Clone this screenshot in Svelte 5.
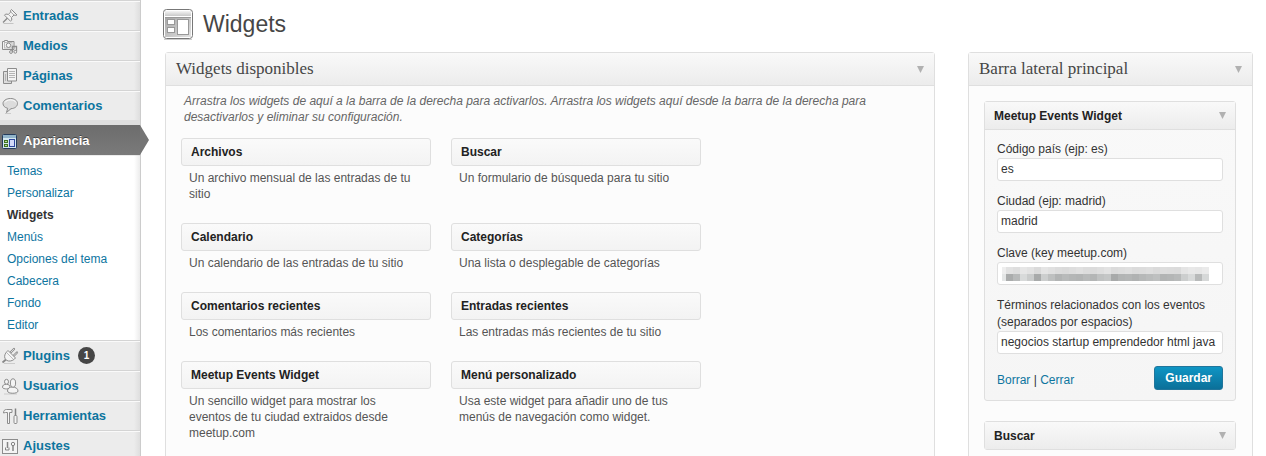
<script lang="ts">
  interface Widget {
    name: string;
    description: string;
  }

  const topMenu = [
    { icon: 'pin', label: 'Entradas' },
    { icon: 'media', label: 'Medios' },
    { icon: 'pages', label: 'Páginas' },
    { icon: 'comment', label: 'Comentarios' }
  ];

  const appearanceMenu = ['Temas', 'Personalizar', 'Widgets', 'Menús', 'Opciones del tema', 'Cabecera', 'Fondo', 'Editor'];

  const bottomMenu = [
    { icon: 'plug', label: 'Plugins', updates: 1 },
    { icon: 'users', label: 'Usuarios' },
    { icon: 'tools', label: 'Herramientas' },
    { icon: 'settings', label: 'Ajustes' }
  ];

  const available: Widget[] = [
    { name: 'Archivos', description: 'Un archivo mensual de las entradas de tu sitio' },
    { name: 'Buscar', description: 'Un formulario de búsqueda para tu sitio' },
    { name: 'Calendario', description: 'Un calendario de las entradas de tu sitio' },
    { name: 'Categorías', description: 'Una lista o desplegable de categorías' },
    { name: 'Comentarios recientes', description: 'Los comentarios más recientes' },
    { name: 'Entradas recientes', description: 'Las entradas más recientes de tu sitio' },
    { name: 'Meetup Events Widget', description: 'Un sencillo widget para mostrar los eventos de tu ciudad extraidos desde meetup.com' },
    { name: 'Menú personalizado', description: 'Usa este widget para añadir uno de tus menús de navegación como widget.' }
  ];

  // grey levels of the mosaic that hides the API key, one per cell
  const maskTop = [238, 226, 222, 230, 226, 218, 228, 224, 220, 218, 221, 224, 220, 219, 222, 226, 219, 221, 223, 219, 220, 222, 218, 221, 220, 219, 228, 232, 230, 234];
  const maskBottom = [228, 170, 184, 216, 202, 168, 204, 190, 178, 184, 180, 178, 184, 180, 192, 196, 168, 178, 180, 176, 182, 186, 190, 178, 180, 184, 204, 216, 184, 214];

  let country = $state('es');
  let city = $state('madrid');
  let apiKey = $state('');
  let terms = $state('negocios startup emprendedor html java');
</script>

{#snippet icon(name: string)}
  <svg class="icon" viewBox="0 0 18 18" width="18" height="18" fill="#f4f4f4" stroke="#8c8c8c" stroke-width="1" aria-hidden="true">
    {#if name === 'pin'}
      <path d="M2.500 16.500h10" stroke="#c4c4c4" />
      <path d="M7 10.500 2 15.500" stroke="#888" stroke-width="1.300" />
      <path d="M10.500 2.500 16 8l-1.800.4-1.200-.4-2.500 2.500.3 2.500-1.300 1.200-6-6L4.700 7l2.600.4L9.800 5l-.3-1.300z" />
      <path d="m7.300 7.400 3.200 3.100M9.800 5 13 8" stroke="#aaa" />
    {:else if name === 'media'}
      <path d="M1.500 4.500h2v-1h3v1h6.500v8h-11.500z" />
      <rect x="3.500" y="5.500" width="7.500" height="5.500" stroke="#bbb" />
      <circle cx="7.500" cy="8.300" r="2.200" />
      <path d="M11.500 15V9.500h4V14" fill="none" stroke-width="1.300" />
      <circle cx="10" cy="15" r="1.400" />
      <circle cx="14.300" cy="14.800" r="1.400" />
    {:else if name === 'pages'}
      <path d="M2.500 4.500h8v12h-8z" fill="#ddd" />
      <path d="M6.500 1.500h9v12.500h-9z" />
      <path d="M8 4.500h6M8 6.500h6M8 8.500h6M8 10.500h6M4.500 7v7" stroke="#b5b5b5" />
    {:else if name === 'comment'}
      <path d="M4 16.500h6" stroke="#ccc" />
      <path d="M9.500 1.500c4.300 0 7 2.200 7 5s-2.700 5-6.500 5.200L5.500 15.500l1.200-4.200C3.700 10.600 2 8.800 2 6.500c0-2.800 3.200-5 7.500-5z" fill="#dcdcdc" />
      <path d="M4 5.500C5.500 2 13.500 2 15 5.500" stroke="#fff" fill="none" />
    {:else if name === 'appearance'}
      <rect x="1.500" y="2.500" width="14" height="14" rx="1" fill="#d3e7ef" stroke="#243c5c" />
      <path d="M2 4.500h13" stroke="#91b4ca" stroke-width="3" />
      <rect x="3.500" y="8.500" width="3" height="2" fill="#bddb9c" stroke="#3e741f" />
      <rect x="3.500" y="12.500" width="3" height="2" fill="#bddb9c" stroke="#3e741f" />
      <rect x="8.500" y="7.500" width="5" height="7" fill="#d2daf8" stroke="#2f489f" />
    {:else if name === 'plug'}
      <path d="M3 16.500h11" stroke="#ccc" />
      <path d="M1.500 15.500 5 12.500" stroke="#888" stroke-width="1.800" />
      <path d="M9.500 5.500 13 2M12.500 9 16 5.500" stroke="#8c8c8c" stroke-width="2.200" stroke-linecap="round" />
      <path d="M9.500 5.500 13 2M12.500 9 16 5.500" stroke="#eee" stroke-width=".8" />
      <path d="m7 3.500 7.500 7.500-1 1c-2 2-5.500 2.700-7.500 1.500L4 11.700C3 9 4 6.500 6 4.500z" />
      <path d="m6 6 6 6" stroke="#bbb" />
    {:else if name === 'users'}
      <path d="M3 17h13" stroke="#ccc" />
      <ellipse cx="5.500" cy="4.800" rx="2" ry="2.500" />
      <path d="M1.500 10.500C1.500 8 3 7.300 5.500 7.300s3.500 1.200 3.500 3.200c0 1.800-6.500 2-7.500 0z" />
      <path d="M6.500 14c0-2.800 2-4 5-4s5.500 1.700 5.500 4c0 3-10.500 3-10.500 0z" />
      <ellipse cx="12" cy="6" rx="2.600" ry="4.200" />
    {:else if name === 'tools'}
      <path d="M2.500 6c0-2.200 1-3.500 3-3.500h5.500v3H8.500v11h-2v-11h-2z" />
      <path d="M14.500 1.500v8" stroke="#808080" stroke-width="1.500" />
      <rect x="13" y="8.500" width="3" height="8" rx="1" />
    {:else if name === 'settings'}
      <rect x="1.500" y="2.500" width="15" height="14" />
      <path d="M6.500 5v6M12 8.500V14" stroke="#858585" stroke-width="1.500" />
      <path d="M4.500 10.500V13h3.500v-2.500" fill="none" stroke="#858585" />
      <circle cx="12" cy="7" r="1.700" stroke="#858585" />
    {/if}
  </svg>
{/snippet}

{#snippet arrow()}
  <svg class="arrow" viewBox="0 0 7 7" width="7" height="7" aria-hidden="true"><path d="M0 0h7L3.500 7z" fill="#b1b1b1" /></svg>
{/snippet}

{#snippet menuItem(item: { icon: string; label: string; updates?: number })}
  <li>
    <a class="menu-item" href="#{item.icon}">
      {@render icon(item.icon)}
      <span>{item.label}</span>
      {#if item.updates}<span class="updates">{item.updates}</span>{/if}
    </a>
  </li>
{/snippet}

<div class="admin">
  <nav class="menu">
    <ul>
      {#each topMenu as item}
        {@render menuItem(item)}
      {/each}
    </ul>
    <a class="menu-item current" href="#appearance">
      {@render icon('appearance')}
      <span>Apariencia</span>
      <svg class="pointer" viewBox="0 0 9 30" width="9" height="30" aria-hidden="true"><path d="M0 0l9 15-9 15z" fill="#757575" /></svg>
    </a>
    <ul class="submenu">
      {#each appearanceMenu as label}
        <li><a href="#sub" class:active={label === 'Widgets'}>{label}</a></li>
      {/each}
    </ul>
    <ul>
      {#each bottomMenu as item}
        {@render menuItem(item)}
      {/each}
    </ul>
  </nav>

  <main>
    <header class="page-title">
      <svg viewBox="0 0 32 32" width="32" height="32" aria-hidden="true">
        <defs>
          <linearGradient id="frame" x2="0" y2="1">
            <stop offset="0" stop-color="#f5f5f5" />
            <stop offset="1" stop-color="#c8c8c8" />
          </linearGradient>
          <linearGradient id="inside" x2="1" y2="1">
            <stop offset="0" stop-color="#a5a5a5" />
            <stop offset="1" stop-color="#e2e2e2" />
          </linearGradient>
        </defs>
        <path d="M2 31.500h28" stroke="#ccc" />
        <rect x="1.500" y="1.500" width="29" height="29" rx="3" fill="#fff" stroke="#777" />
        <rect x="3" y="3" width="26" height="5" fill="url(#frame)" />
        <rect x="3" y="9" width="26" height="20" fill="url(#inside)" />
        <path d="M3 9.500h26" stroke="#999" />
        <g fill="#fff" stroke="#999">
          <rect x="5.500" y="11.500" width="7" height="5" />
          <rect x="5.500" y="19.500" width="7" height="5" />
          <rect x="15.500" y="11.500" width="11" height="15" />
        </g>
      </svg>
      <h1>Widgets</h1>
    </header>

    <div class="columns">
      <section class="panel">
        <div class="panel-head">
          <h2>Widgets disponibles</h2>
          {@render arrow()}
        </div>
        <div class="available">
          <p class="intro">
            Arrastra los widgets de aquí a la barra de la derecha para activarlos. Arrastra los widgets aquí desde la barra de la derecha para desactivarlos y eliminar su configuración.
          </p>
          <div class="widget-grid">
            {#each available as widget}
              <article>
                <h3 class="widget-bar">{widget.name}</h3>
                <p>{widget.description}</p>
              </article>
            {/each}
          </div>
        </div>
      </section>

      <section class="panel sidebar-panel">
        <div class="panel-head">
          <h2>Barra lateral principal</h2>
          {@render arrow()}
        </div>
        <div class="placed">
          <div class="placed-widget">
            <div class="placed-head">
              <h3>Meetup Events Widget</h3>
              {@render arrow()}
            </div>
            <form>
              <div class="field">
                <label for="country">Código país (ejp: es)</label>
                <input id="country" type="text" bind:value={country} />
              </div>
              <div class="field">
                <label for="city">Ciudad (ejp: madrid)</label>
                <input id="city" type="text" bind:value={city} />
              </div>
              <div class="field">
                <label for="key">Clave (key meetup.com)</label>
                <div class="masked">
                  <input id="key" type="text" bind:value={apiKey} />
                  <svg viewBox="0 0 208 14" width="208" height="14" shape-rendering="crispEdges" aria-hidden="true">
                    {#each maskTop as level, i}
                      <rect x={i * 7 - 3} y="0" width="7" height="7" fill="rgb({level},{level},{level})" />
                      <rect x={i * 7 - 3} y="7" width="7" height="7" fill="rgb({maskBottom[i]},{maskBottom[i] + 2},{maskBottom[i] + 2})" />
                    {/each}
                  </svg>
                </div>
              </div>
              <div class="field">
                <label for="terms">Términos relacionados con los eventos (separados por espacios)</label>
                <input id="terms" type="text" bind:value={terms} />
              </div>
              <div class="actions">
                <span><a href="#delete">Borrar</a> | <a href="#close">Cerrar</a></span>
                <button type="button">Guardar</button>
              </div>
            </form>
          </div>
          <div class="placed-widget">
            <div class="placed-head">
              <h3>Buscar</h3>
              {@render arrow()}
            </div>
          </div>
        </div>
      </section>
    </div>
  </main>
</div>

<style>
  :global(body) {
    background: #fff;
    color: #333;
    font-family: "Liberation Sans", Arial, sans-serif;
    font-size: 12px;
  }

  .admin {
    display: flex;
    height: 100vh;
    overflow: hidden;
  }

  h1, h2, h3, p, ul {
    margin: 0;
    padding: 0;
    font-weight: normal;
  }

  ul {
    list-style: none;
  }

  a {
    color: #0d759f;
    text-decoration: none;
  }

  .menu {
    flex: none;
    box-sizing: border-box;
    width: 141px;
    border-right: 1px solid #ccc;
    background: linear-gradient(to left, #dedede, #ececec 6px);
  }

  .menu-item {
    display: flex;
    align-items: center;
    gap: 4px;
    box-sizing: border-box;
    height: 30px;
    padding-left: 1px;
    border-top: 1px solid #d4d4d4;
    box-shadow: inset 0 1px #fafafa;
    font-size: 13px;
    font-weight: bold;
  }

  .updates {
    width: 17px;
    margin-left: 4px;
    border-radius: 10px;
    background: #464646;
    color: #fff;
    font-size: 10px;
    line-height: 17px;
    text-align: center;
  }

  .current {
    position: relative;
    margin-top: 5px;
    border-top: 1px solid #6d6d6d;
    background: linear-gradient(#6d6d6d, #7a7a7a);
    box-shadow: 0 -5px #dfdfdf;
    color: #fff;
    text-shadow: 0 -1px #444;
    margin-bottom: 1px;
  }

  .pointer {
    position: absolute;
    top: -1px;
    left: 140px;
  }

  .submenu {
    padding: 4px 0;
    background: linear-gradient(to left, #ececec, #fff 6px);
  }

  .submenu a {
    display: block;
    padding-left: 7px;
    line-height: 22px;
  }

  .submenu .active {
    color: #333;
    font-weight: bold;
  }

  main {
    flex: 1;
    min-width: 0;
    padding: 8px 13px 0 21px;
  }

  .page-title {
    display: flex;
    align-items: center;
    gap: 9px;
    height: 32px;
    margin-bottom: 12px;
  }

  h1 {
    color: #464646;
    font-size: 23px;
  }

  .columns {
    display: flex;
    gap: 33px;
    padding-left: 3px;
  }

  .panel {
    flex: 1;
    box-sizing: border-box;
    min-width: 0;
    border: 1px solid #dfdfdf;
    border-radius: 3px;
    background: #fcfcfc;
  }

  .sidebar-panel {
    flex: none;
    width: 285px;
  }

  .panel-head {
    display: flex;
    align-items: center;
    justify-content: space-between;
    height: 32px;
    padding: 0 10px;
    border-bottom: 1px solid #dfdfdf;
    background: linear-gradient(#f9f9f9, #ececec);
  }

  h2 {
    color: #464646;
    font-family: "Liberation Serif", Georgia, serif;
    font-size: 17px;
  }

  .available {
    padding: 7px 15px;
  }

  .intro {
    padding: 0 3px;
    margin-bottom: 13px;
    color: #666;
    font-style: italic;
    line-height: 16px;
  }

  .widget-grid {
    display: grid;
    grid-template-columns: 250px 250px;
    gap: 21px 20px;
  }

  .widget-bar {
    box-sizing: border-box;
    height: 28px;
    padding: 0 9px;
    border: 1px solid #dfdfdf;
    border-radius: 3px;
    background: linear-gradient(#fafafa, #f3f3f3);
    color: #222;
    font-size: 12px;
    font-weight: bold;
    line-height: 26px;
  }

  article p {
    padding: 4px 12px 0 8px;
    color: #555;
    line-height: 16px;
  }

  .placed {
    display: grid;
    gap: 20px;
    padding: 15px 16px 15px 15px;
  }

  .placed-widget {
    border: 1px solid #dfdfdf;
    border-radius: 3px;
    background: linear-gradient(#f9f9f9, #f5f5f5);
  }

  .placed-head {
    display: flex;
    align-items: center;
    justify-content: space-between;
    height: 27px;
    padding: 0 9px;
    background: linear-gradient(#f9f9f9, #ececec);
  }

  .placed-head h3 {
    color: #222;
    font-size: 12px;
    font-weight: bold;
  }

  form {
    display: grid;
    gap: 12px;
    padding: 11px 12px 10px;
    border-top: 1px solid #dfdfdf;
  }

  label {
    display: block;
    line-height: 17px;
  }

  input {
    display: block;
    box-sizing: border-box;
    width: 100%;
    height: 23px;
    padding: 0 3px 2px;
    border: 1px solid #dfdfdf;
    border-radius: 3px;
    background: #fff;
    color: #333;
    font: inherit;
  }

  .masked {
    position: relative;
  }

  .masked svg {
    position: absolute;
    top: 5px;
    left: 5px;
  }

  .actions {
    display: flex;
    align-items: flex-end;
    justify-content: space-between;
    line-height: 20px;
  }

  button {
    height: 24px;
    padding: 0 10px;
    border: 1px solid #21759b;
    border-radius: 3px;
    background: linear-gradient(#0f95c4, #0b7099);
    color: #fff;
    font: bold 12px "Liberation Sans", Arial, sans-serif;
  }

  .icon,
  .arrow {
    flex: none;
  }
</style>
